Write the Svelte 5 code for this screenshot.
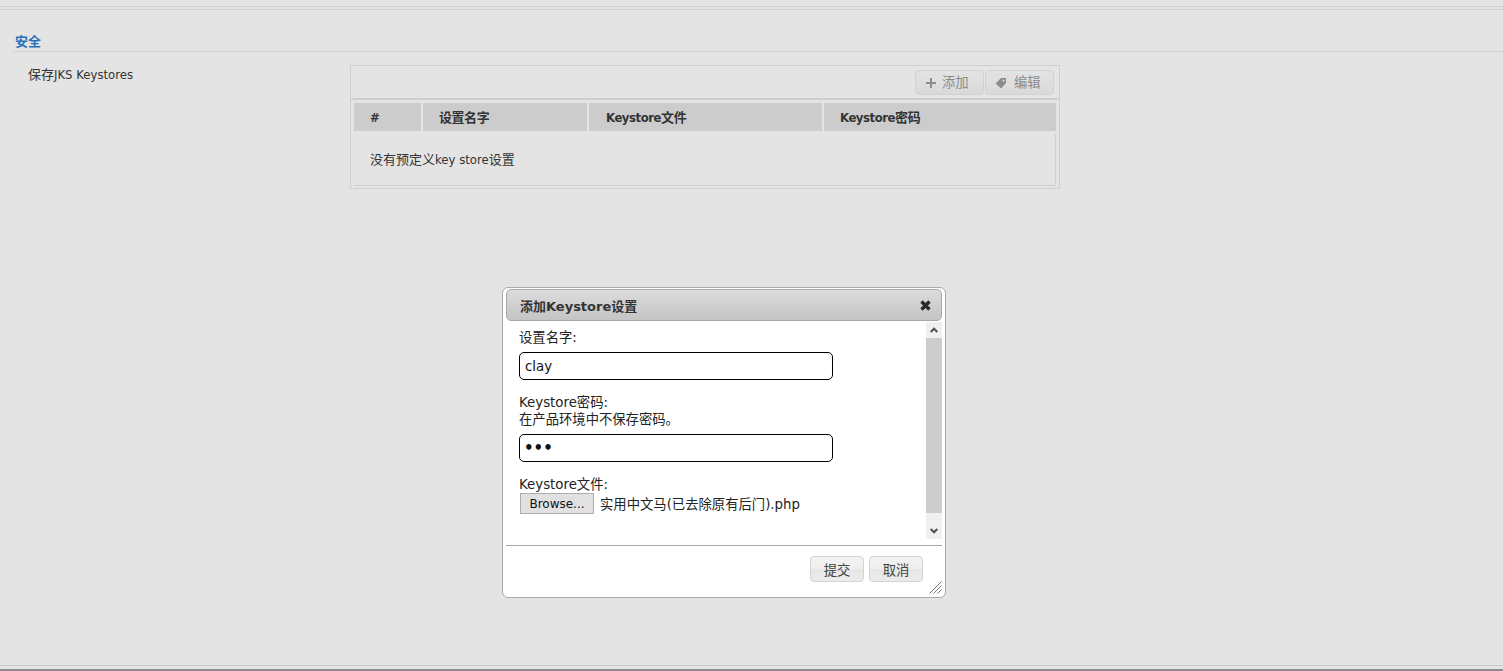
<script>
  let columns = [
    { label: '#', width: 67, pad: 16 },
    { label: '设置名字', width: 164, pad: 16 },
    { label: 'Keystore文件', width: 233, pad: 17 },
    { label: 'Keystore密码', width: 232, pad: 16 }
  ];
</script>

<div class="page">
  <div class="top-rule"></div>

  <h2 class="section-title">安全</h2>

  <div class="row">
    <div class="row-label">保存JKS Keystores</div>
    <div class="panel">
      <div class="toolbar">
        <button class="tool-btn add">
          <svg width="10" height="10" viewBox="0 0 10 10"><path d="M4 0h2v4h4v2H6v4H4V6H0V4h4z" fill="#8d8d8d"/></svg>
          添加
        </button>
        <button class="tool-btn edit">
          <svg width="12" height="12" viewBox="0 0 12 12"><path d="M6 1h5v5l-5 5.500L.5 6.500zM8.500 2.500a1 1 0 1 0 .01 0z" fill="#8d8d8d" fill-rule="evenodd"/></svg>
          编辑
        </button>
      </div>
      <div class="table-wrap">
        <div class="thead">
          {#each columns as col}
            <div class="th" style="width:{col.width}px;padding-left:{col.pad}px">{col.label}</div>
          {/each}
        </div>
        <div class="tbody">没有预定义key store设置</div>
      </div>
    </div>
  </div>

  <div class="bottom-rule"></div>

  <div class="dialog">
    <div class="dialog-head">
      <span>添加Keystore设置</span>
      <svg class="close" width="11" height="11" viewBox="0 0 11 11"><path d="M1.500 1.500l8 8M9.500 1.500l-8 8" stroke="#2b2b2b" stroke-width="3.500"/></svg>
    </div>
    <div class="dialog-body">
      <div class="form">
        <label class="field-label first" for="ks-name">设置名字:</label>
        <input id="ks-name" class="text-input" type="text" value="clay" />

        <label class="field-label second" for="ks-pass">Keystore密码:<br />在产品环境中不保存密码。</label>
        <input id="ks-pass" class="text-input pass" type="password" value="abc" />

        <div class="field-label third">Keystore文件:</div>
        <div class="file-row">
          <span class="browse">Browse...</span>
          <span class="file-name">实用中文马(已去除原有后门).php</span>
        </div>
      </div>
      <div class="scrollbar">
        <div class="arrow">
          <svg width="8" height="6" viewBox="0 0 8 6"><path d="M.7 5l3.300-3.300L7.300 5" fill="none" stroke="#505050" stroke-width="2"/></svg>
        </div>
        <div class="thumb"></div>
        <div class="arrow down">
          <svg width="8" height="6" viewBox="0 0 8 6"><path d="M.7 1l3.300 3.300L7.300 1" fill="none" stroke="#505050" stroke-width="2"/></svg>
        </div>
      </div>
    </div>
    <div class="dialog-foot">
      <button class="foot-btn">提交</button>
      <button class="foot-btn">取消</button>
      <svg class="grip" width="13" height="13" viewBox="0 0 13 13"><path d="M12.500 .5l-12 12M12.500 4.500l-8 8M12.500 8.500l-4 4" stroke="#777" stroke-width="1" fill="none"/></svg>
    </div>
  </div>
</div>

<style>
  :global(body) {
    margin: 0;
    background: #e4e4e4;
  }

  .page {
    height: 671px;
    box-sizing: border-box;
    padding-top: 6px;
    position: relative;
    overflow: hidden;
    font-family: "DejaVu Sans Condensed", "DejaVu Sans", "Noto Sans CJK SC", sans-serif;
    font-size: 13px;
    color: #333;
  }

  .top-rule {
    height: 2px;
    border-top: 1px solid #cdcdcd;
    border-bottom: 1px solid #cdcdcd;
  }

  .section-title {
    margin: 24px 0 0 13px;
    padding: 0 0 2px 2px;
    height: 15px;
    line-height: 15px;
    font-size: 13px;
    font-weight: bold;
    color: #2a70b8;
    border-bottom: 1px solid #cfcfcf;
  }

  .row {
    display: flex;
    margin: 13px 0 0 28px;
    height: 476px;
  }

  .row-label {
    width: 322px;
    line-height: 20px;
    flex: none;
  }

  .panel {
    width: 710px;
    height: 124px;
    box-sizing: border-box;
    border: 1px solid #cfcfcf;
  }

  .toolbar {
    display: flex;
    justify-content: flex-end;
    gap: 1px;
    height: 34px;
    box-sizing: border-box;
    padding: 4px 5px 0 0;
    border-bottom: 2px solid #cfcfcf;
  }

  .tool-btn {
    display: flex;
    align-items: center;
    gap: 6px;
    width: 69px;
    height: 25px;
    box-sizing: border-box;
    padding: 0 0 2px 10px;
    font: inherit;
    font-size: 13.330px;
    color: #8a8a8a;
    border: 1px solid #d2d2d2;
    border-radius: 4px;
    background: linear-gradient(#e3e3e3 0%, #dedede 60%, #d9d9d9 100%);
  }

  .tool-btn.edit {
    padding-left: 9px;
    gap: 7px;
  }

  .tool-btn svg {
    margin-top: 2px;
  }

  .table-wrap {
    margin: 3px 3px 0 3px;
    height: 83px;
    box-sizing: border-box;
    border-bottom: 1px solid #cfcfcf;
  }

  .thead {
    display: flex;
    gap: 2px;
  }

  .th {
    height: 28px;
    line-height: 29px;
    box-sizing: border-box;
    background: #cccccc;
    font-weight: bold;
    letter-spacing: -0.45px;
    color: #333;
  }

  .tbody {
    height: 51px;
    box-sizing: border-box;
    padding: 17px 0 0 16px;
    line-height: 18px;
    border-right: 1px solid #cfcfcf;
    margin-top: 3px;
  }

  .bottom-rule {
    height: 6px;
    box-sizing: border-box;
    border-top: 1px solid #c8c8c8;
    border-bottom: 2px solid #8d8d8d;
    position: absolute;
    left: 0;
    right: 0;
    bottom: 0;
  }

  .dialog {
    position: absolute;
    left: 502px;
    top: 287px;
    width: 444px;
    height: 311px;
    box-sizing: border-box;
    background: #fff;
    border: 1px solid #aaa;
    border-radius: 6px;
    padding: 1px 3px 3px;
    display: flex;
    flex-direction: column;
    font-family: "DejaVu Sans", "Noto Sans CJK SC", sans-serif;
  }

  .dialog-head {
    display: flex;
    justify-content: space-between;
    align-items: center;
    height: 32px;
    flex: none;
    box-sizing: border-box;
    padding: 0 10px 0 13px;
    border: 1px solid #a8a8a8;
    border-radius: 5px;
    background: linear-gradient(#dcdcdc, #c4c4c4);
    font-weight: bold;
    font-size: 13px;
    color: #333;
  }

  .dialog-body {
    display: flex;
    height: 224px;
    flex: none;
    border-bottom: 1px solid #aaa;
  }

  .form {
    flex: 1;
    box-sizing: border-box;
    padding: 8px 0 0 13px;
    color: #222;
    font-size: 13.330px;
  }

  .field-label {
    display: block;
    line-height: 17px;
  }

  .second,
  .third {
    margin-top: 14px;
  }

  .text-input {
    display: block;
    width: 314px;
    height: 28px;
    box-sizing: border-box;
    margin-top: 6px;
    padding: 0 5px;
    border: 1px solid #000;
    border-radius: 5px;
    font: inherit;
    color: #111;
    background: #fff;
    outline: none;
  }

  .text-input.pass {
    padding-left: 4px;
    font-size: 15px;
    font-weight: bold;
  }

  .file-row {
    display: flex;
    align-items: center;
    gap: 6px;
    height: 21px;
    padding-left: 1px;
  }

  .browse {
    display: flex;
    align-items: center;
    justify-content: center;
    width: 74px;
    height: 21px;
    box-sizing: border-box;
    background: #e1e1e1;
    border: 1px solid #adadad;
    font-size: 12px;
    color: #111;
  }

  .file-name {
    color: #222;
  }

  .scrollbar {
    width: 16px;
    margin-top: 1px;
    height: 217px;
    flex: none;
    background: #f0f0f0;
    display: flex;
    flex-direction: column;
  }

  .arrow {
    height: 16px;
    flex: none;
    display: flex;
    align-items: center;
    justify-content: center;
  }

  .thumb {
    height: 175px;
    background: #cdcdcd;
    flex: none;
  }

  .arrow.down {
    margin-top: auto;
  }

  .dialog-foot {
    flex: 1;
    display: flex;
    justify-content: flex-end;
    align-items: flex-start;
    gap: 5px;
    padding: 10px 19px 0 0;
    position: relative;
  }

  .foot-btn {
    width: 54px;
    height: 26px;
    padding: 0;
    font: inherit;
    font-size: 13.330px;
    color: #444;
    border: 1px solid #d3d3d3;
    border-radius: 4px;
    background: linear-gradient(#f3f3f3 0%, #eeeeee 50%, #e6e6e6 51%, #ececec 100%);
  }

  .grip {
    position: absolute;
    right: 0;
    bottom: 0;
  }
</style>
